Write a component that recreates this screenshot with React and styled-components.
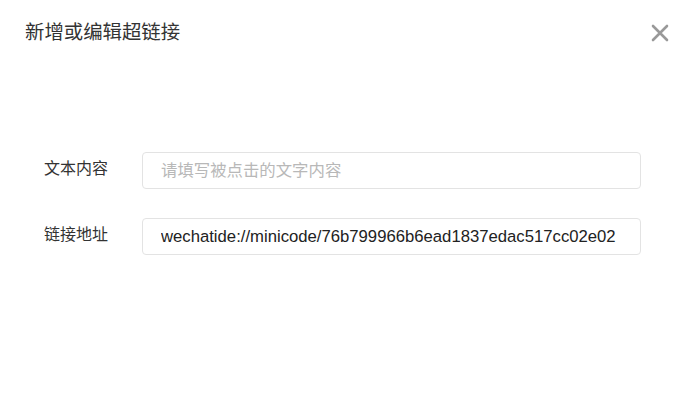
import styled, { createGlobalStyle } from 'styled-components'

const GlobalStyle = createGlobalStyle`
    html, body {
        margin: 0;
        padding: 0;
        background: #ffffff;
    }
    body {
        font-family: "Liberation Sans", "Noto Sans CJK SC", sans-serif;
    }
`

const Dialog = styled.div`
    width: 691px;
    height: 400px;
    box-sizing: border-box;
    background: #fff;
    display: flex;
    flex-direction: column;
`

const Header = styled.div`
    height: 66px;
    padding: 0 20px 0 25px;
    display: flex;
    justify-content: space-between;
    align-items: center;
`

const Title = styled.h2`
    margin: 0;
    font-size: 19.4px;
    font-weight: 400;
    color: #333;
    line-height: 1;
`

const Close = styled.button`
    width: 22px;
    height: 22px;
    padding: 0;
    border: none;
    background: none;
    display: flex;
    align-items: center;
    justify-content: center;
    cursor: pointer;
`

const Form = styled.div`
    padding: 86px 50px 0 44px;
    display: flex;
    flex-direction: column;
    gap: 29px;
`

const Row = styled.label`
    display: flex;
    align-items: center;
`

const Label = styled.span`
    width: 98px;
    flex-shrink: 0;
    font-size: 16px;
    line-height: 1;
    color: #333;
    padding-bottom: 3px;
`

const Input = styled.input`
    flex: 1;
    height: 37px;
    box-sizing: border-box;
    padding: 0 18px 0 18px;
    border: 1px solid #e3e3e3;
    border-radius: 4px;
    font-family: "Liberation Sans", "Noto Sans CJK SC", sans-serif;
    font-size: 16.7px;
    color: #222;
    outline: none;

    &::placeholder {
        font-size: 16.4px;
        color: #b8b8b8;
    }
`

const App = () => {
    return (
        <>
            <GlobalStyle />
            <Dialog>
                <Header>
                    <Title>新增或编辑超链接</Title>
                    <Close aria-label="close">
                        <svg width="18" height="18" viewBox="0 0 18 18">
                            <path d="M2 2 L16 16 M16 2 L2 16" stroke="#999" strokeWidth="2.6" strokeLinecap="round" />
                        </svg>
                    </Close>
                </Header>
                <Form>
                    <Row>
                        <Label>文本内容</Label>
                        <Input placeholder="请填写被点击的文字内容" />
                    </Row>
                    <Row>
                        <Label>链接地址</Label>
                        <Input defaultValue="wechatide://minicode/76b799966b6ead1837edac517cc02e02" />
                    </Row>
                </Form>
            </Dialog>
        </>
    );
};

export default App;
